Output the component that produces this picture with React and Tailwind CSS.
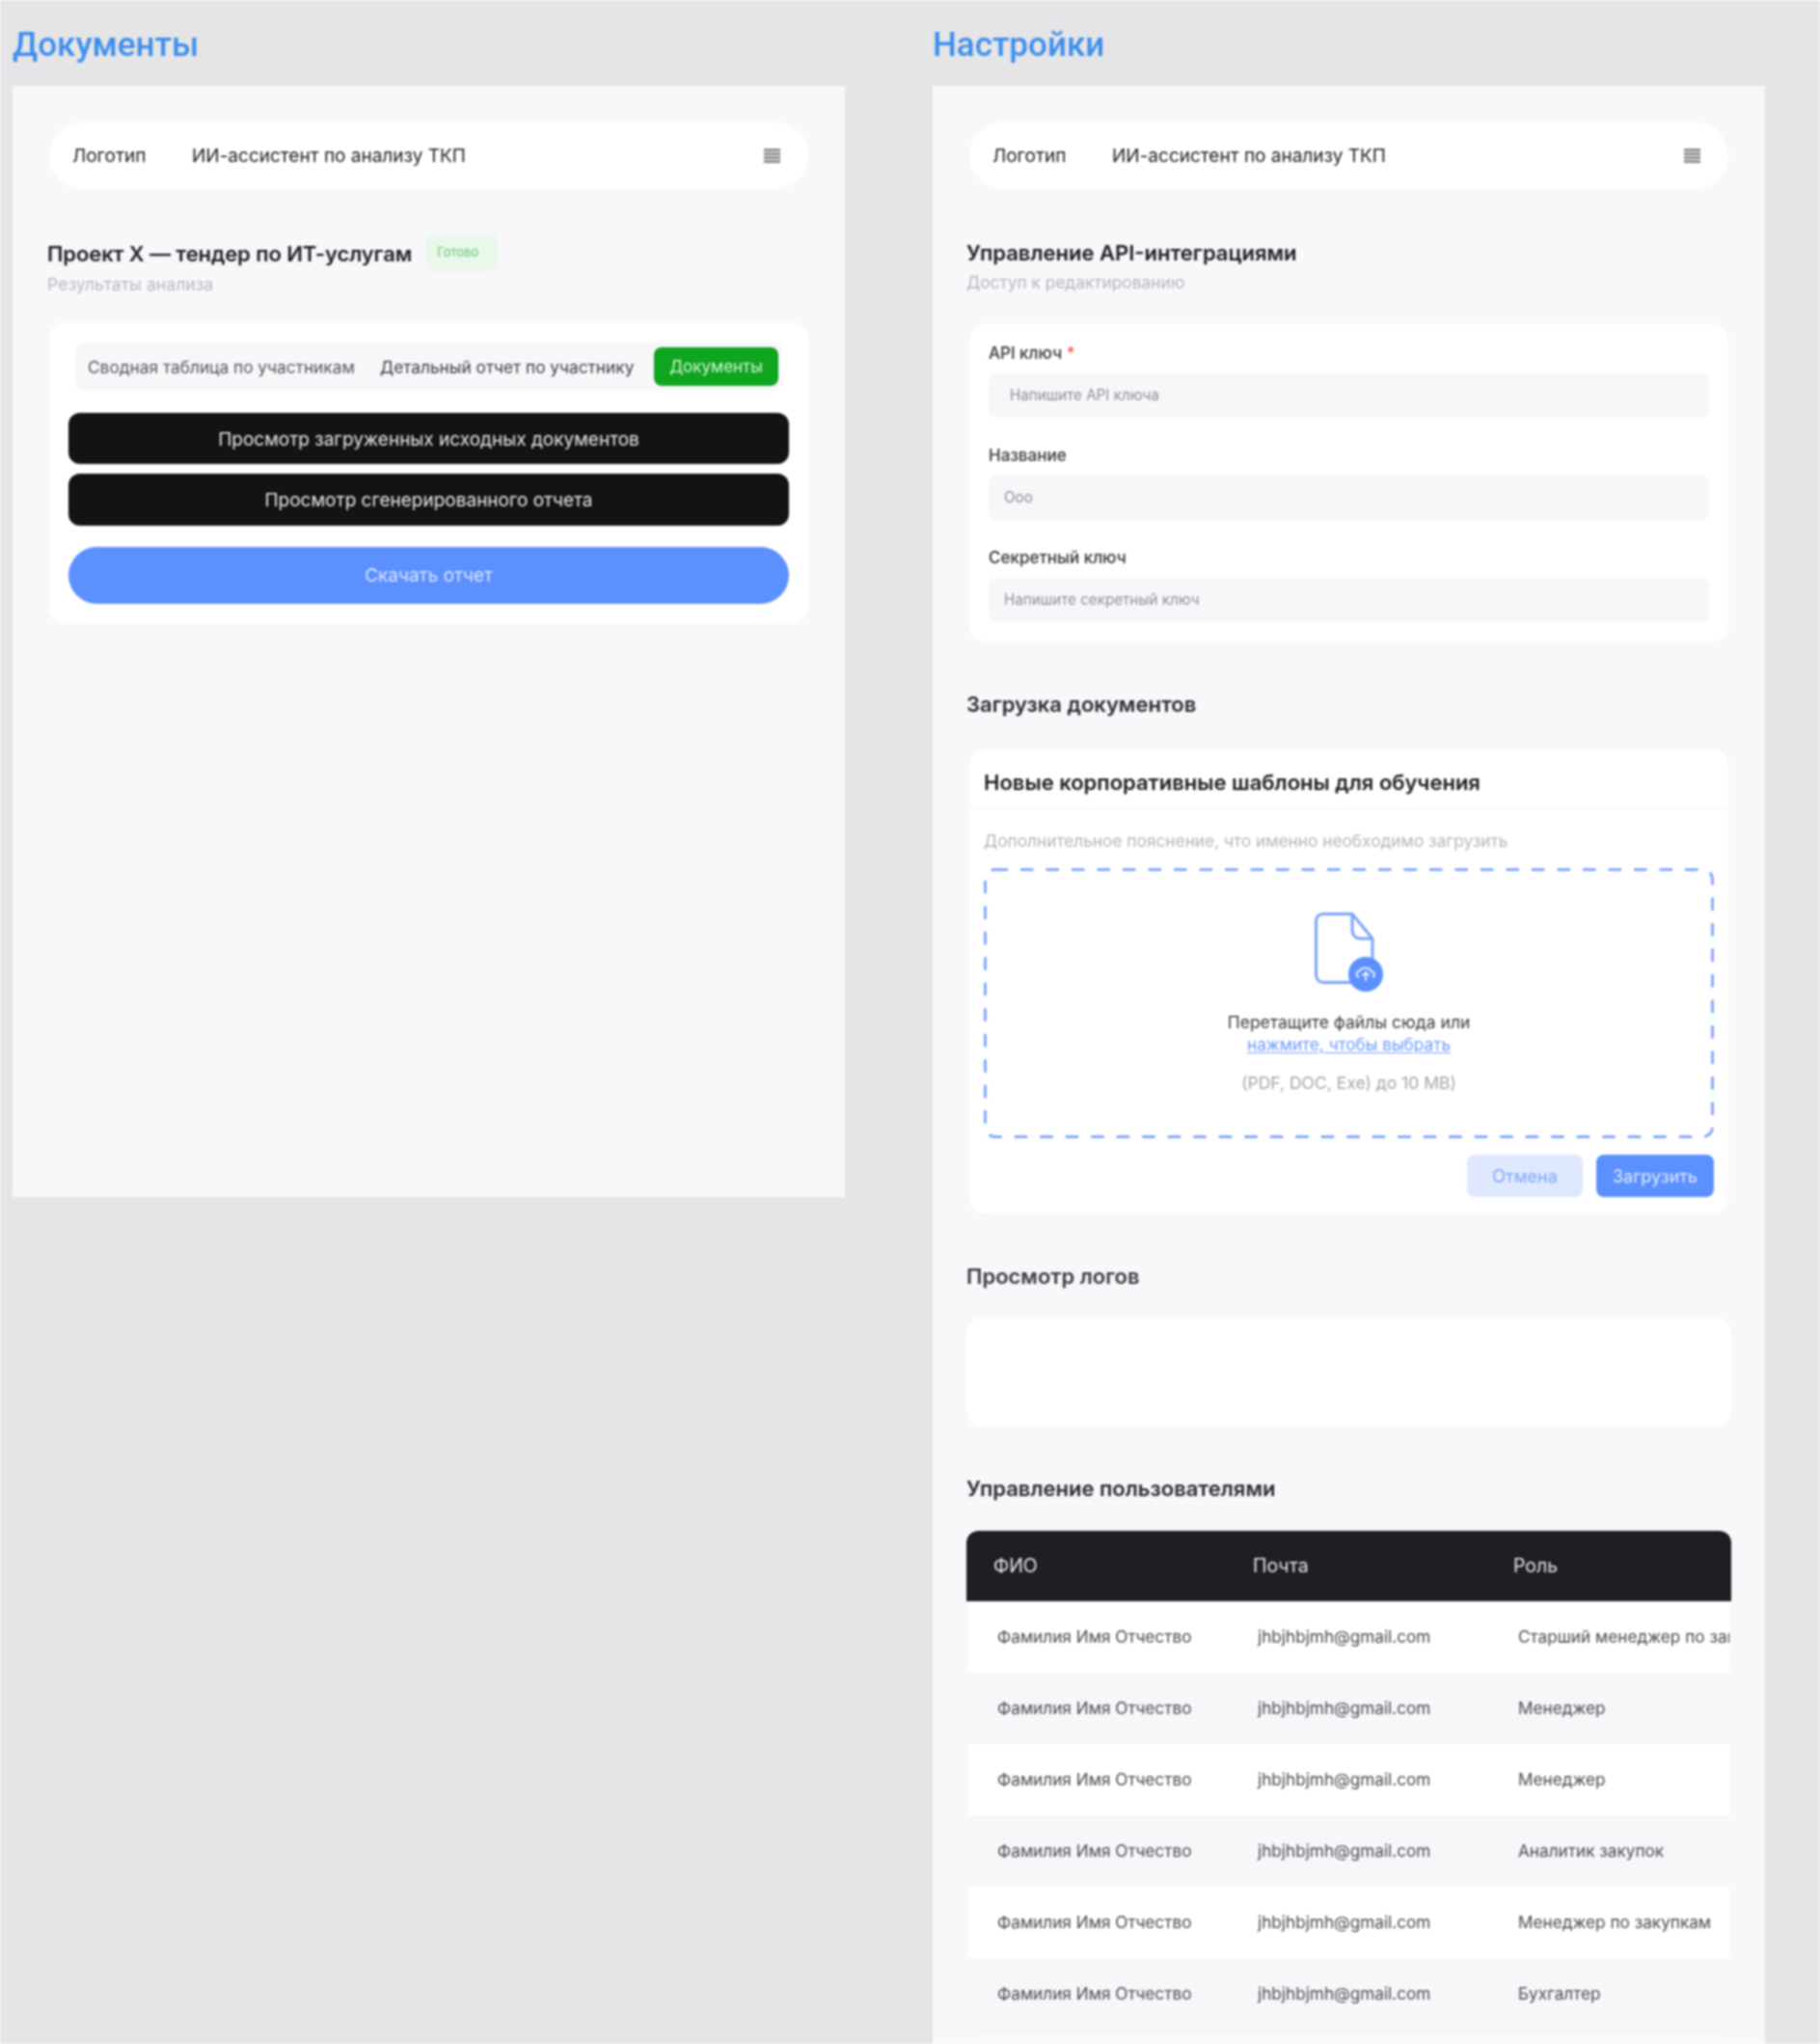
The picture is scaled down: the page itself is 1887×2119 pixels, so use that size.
const users = [
  "Старший менеджер по закупкам",
  "Менеджер",
  "Менеджер",
  "Аналитик закупок",
  "Менеджер по закупкам",
  "Бухгалтер",
];

const Navbar = () => (
  <div className="mx-[3px] h-[69px] rounded-full bg-white flex items-center pl-[24px] pr-[29px] text-[19px] text-[#1d1d22]">
    <span className="w-[124px] pt-[2px]">Логотип</span>
    <span className="pt-[2px]">ИИ-ассистент по анализу ТКП</span>
    <div className="ml-auto w-[17px] flex flex-col gap-[1px]">
      <div className="h-[3px] bg-[#8f8f96]" />
      <div className="h-[3px] bg-[#8f8f96]" />
      <div className="h-[3px] bg-[#8f8f96]" />
      <div className="h-[3px] bg-[#8f8f96]" />
    </div>
  </div>
);

const Field = ({ label, required, placeholder, inset }) => (
  <div>
    <div className="text-[17px] leading-[20px] font-medium text-[#33333a]">
      {label}
      {required && <span className="text-[#f0583a]"> *</span>}
    </div>
    <div className={`mt-[11px] h-[46px] rounded-[8px] bg-[#f7f7fa] flex items-center text-[15.2px] text-[#8d8d96] ${inset}`}>
      {placeholder}
    </div>
  </div>
);

const FileIcon = () => (
  <svg width="72" height="83" viewBox="0 0 72 83" fill="none" className="block">
    <path
      d="M9 1.5H39L60 27V62C60 68 57 72.5 51 72.5H9C4.5 72.5 1.5 69 1.5 64V9C1.5 4.5 4.5 1.5 9 1.5Z"
      stroke="#7ba4fb"
      strokeWidth="3"
    />
    <path d="M39 1.5V18C39 23.5 42.5 27 48 27H60" stroke="#7ba4fb" strokeWidth="3" />
    <circle cx="53" cy="64" r="18" fill="#5c90ff" />
    <path d="M46 67C42.5 66 43 60.5 47 60.5C48 56.5 57 56.5 58.5 61C62.5 61 63 66 60 67" stroke="#dfe8ff" strokeWidth="2" />
    <path d="M53 71V62M49.5 65.5L53 62L56.5 65.5" stroke="#dfe8ff" strokeWidth="2" />
  </svg>
);

export default function App() {
  return (
    <div
      className="h-[2119px] overflow-hidden bg-[#e5e4e7] pl-[13px] flex items-start gap-[91px] blur-[1px]"
      style={{ fontFamily: "Inter, 'Noto Sans', sans-serif" }}
    >
      {/* ДОКУМЕНТЫ */}
      <div className="w-[863px]">
        <div className="h-[89px] pt-[23px] text-[35px] leading-[48px] font-medium text-[#3d8fee] font-['Roboto']">Документы</div>
        <div className="h-[1152px] bg-[#f8f7fa] px-[35px] pt-[38px]">
          <Navbar />

          <div className="mt-[47px] ml-[1px] flex items-center h-[38px]">
            <h2 className="pt-[2px] text-[22px] font-semibold text-[#1d1d22] tracking-[-0.1px]">Проект X — тендер по ИТ-услугам</h2>
            <span className="ml-[15px] w-[74px] h-[38px] rounded-[8px] bg-[#eaf8ec] text-[#5cc46c] text-[13px] pl-[11px] flex items-center">Готово</span>
          </div>
          <p className="mt-[4px] ml-[1px] text-[17.6px] leading-[20px] text-[#b9b9c0]">Результаты анализа</p>

          <div className="mt-[30px] mx-[3px] h-[311px] rounded-[16px] bg-white px-[20px] pt-[20px]">
            <div className="mx-[7px] h-[50px] bg-[#f7f7fa] rounded-[8px] flex items-center pl-[13px] pr-[4px] text-[17.3px] text-[#55555c]">
              <span className="w-[303px] pt-[2px] whitespace-nowrap">Сводная таблица по участникам</span>
              <span className="pt-[2px] whitespace-nowrap text-[#3c3c44]">Детальный отчет по участнику</span>
              <span className="ml-auto w-[129px] h-[40px] pt-[2px] rounded-[8px] bg-[#0fa51f] text-[#d8f5db] flex items-center justify-center text-[17px]">Документы</span>
            </div>
            <button className="mt-[23px] pt-[3px] w-full h-[53px] rounded-[12px] bg-[#131316] text-[#e8e8ea] text-[19px]">Просмотр загруженных исходных документов</button>
            <button className="mt-[10px] pt-[2px] w-full h-[54px] rounded-[12px] bg-[#131316] text-[#e8e8ea] text-[19px]">Просмотр сгенерированного отчета</button>
            <button className="mt-[22px] pt-[2px] w-full h-[59px] rounded-full bg-[#5c90ff] text-[#d9e5ff] text-[19px]">Скачать отчет</button>
          </div>
        </div>
      </div>

      {/* НАСТРОЙКИ */}
      <div className="w-[863px]">
        <div className="h-[89px] pt-[23px] text-[35px] leading-[48px] font-medium text-[#3d8fee] font-['Roboto']">Настройки</div>
        <div className="bg-[#f8f7fa] px-[35px] pt-[38px] pb-[40px]">
          <Navbar />

          <h2 className="mt-[52px] text-[22px] leading-[28px] font-semibold text-[#1d1d22]">Управление API-интеграциями</h2>
          <p className="mt-[5px] text-[17.3px] leading-[24px] text-[#b5b5bc]">Доступ к редактированию</p>

          <div className="mt-[31px] mx-[3px] h-[329px] rounded-[16px] bg-white px-[20px] pt-[20px] flex flex-col gap-[29px]">
            <Field label="API ключ" required placeholder="Напишите API ключа" inset="pl-[22px]" />
            <Field label="Название" placeholder="Ооо" inset="pl-[16px]" />
            <Field label="Секретный ключ" placeholder="Напишите секретный ключ" inset="pl-[16px]" />
          </div>

          <h2 className="mt-[51px] text-[22px] leading-[28px] font-semibold text-[#2a2a30]">Загрузка документов</h2>

          <div className="mt-[33px] mx-[3px] h-[481px] rounded-[16px] bg-white">
            <div className="h-[62px] border-b border-[#f7f7fa] pl-[15px] pt-[20px] text-[22px] leading-[28px] font-semibold text-[#1d1d22]">
              Новые корпоративные шаблоны для обучения
            </div>
            <p className="mt-[23px] ml-[15px] text-[17.3px] leading-[20px] text-[#b5b5bc]">Дополнительное пояснение, что именно необходимо загрузить</p>

            <div className="relative mt-[18px] ml-[15px] w-[757px] h-[280px] flex flex-col items-center pt-[46px]">
              <svg width="757" height="280" className="absolute inset-0">
                <rect x="1.5" y="1.5" width="754" height="277" rx="10" fill="none" stroke="#84a9fb" strokeWidth="3" strokeDasharray="13.5 13" />
              </svg>
              <FileIcon />
              <div className="mt-[20px] text-[17.5px] leading-[22px] text-[#3c3c44] whitespace-nowrap">Перетащите файлы сюда или</div>
              <div className="mt-[1px] text-[17.2px] leading-[22px] text-[#6d9bfb] underline underline-offset-2 whitespace-nowrap">нажмите, чтобы выбрать</div>
              <div className="mt-[18px] text-[17.5px] leading-[22px] text-[#a5a5ad] whitespace-nowrap">(PDF, DOC, Exe) до 10 MB)</div>
            </div>

            <div className="mt-[17px] mr-[15px] flex justify-end gap-[14px] text-[18px]">
              <button className="w-[120px] h-[44px] rounded-[8px] bg-[#dfe8ff] text-[#7fa6fb]">Отмена</button>
              <button className="w-[122px] h-[44px] rounded-[8px] bg-[#5c90ff] text-[#dfe8ff]">Загрузить</button>
            </div>
          </div>

          <h2 className="mt-[51px] text-[22px] leading-[28px] font-semibold text-[#3a3a40]">Просмотр логов</h2>
          <div className="mt-[29px] h-[113px] rounded-[16px] bg-white" />

          <h2 className="mt-[50px] text-[22px] leading-[28px] font-semibold text-[#2a2a30]">Управление пользователями</h2>

          <div className="mt-[30px] rounded-[12px] overflow-hidden">
            <div className="h-[73px] bg-[#1f1e23] text-[#e4e4e8] text-[19.5px] rounded-t-[12px] grid grid-cols-[297px_270px_1fr] items-center">
              <span className="pl-[28px]">ФИО</span>
              <span>Почта</span>
              <span>Роль</span>
            </div>
            <div className="mx-[2px] rounded-b-[12px] overflow-hidden border-b border-[#efeff3]">
              {users.map((role, i) => (
                <div
                  key={i}
                  className={`h-[74px] text-[17.2px] text-[#4a4a52] grid grid-cols-[300px_270px_1fr] items-center whitespace-nowrap overflow-hidden ${i % 2 ? "bg-[#f7f7fa]" : "bg-white"}`}
                >
                  <span className="pl-[30px]">Фамилия Имя Отчество</span>
                  <span>jhbjhbjmh@gmail.com</span>
                  <span>{role}</span>
                </div>
              ))}
            </div>
          </div>
        </div>
      </div>
    </div>
  );
}
